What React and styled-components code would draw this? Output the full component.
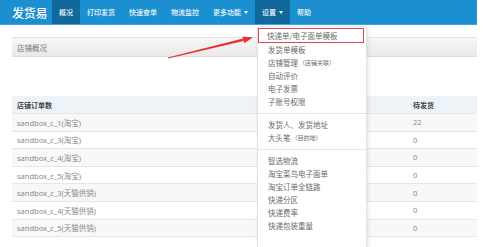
import React from "react";
import styled, { createGlobalStyle } from "styled-components";

const Global = createGlobalStyle`
  html, body { margin: 0; padding: 0; background: #fff; }
  body { font-family: "Noto Sans", "Noto Sans CJK SC", sans-serif; }
`;

const Page = styled.div`
  position: relative;
  width: 500px;
  height: 247px;
  overflow: hidden;
  background: #fff;
`;

const Nav = styled.div`
  width: 477px;
  height: 25px;
  background: #1c8fd0;
  display: flex;
  align-items: stretch;
  padding-left: 12px;
  box-sizing: border-box;
  border-bottom: 1px solid #3aa2dc;
`;

const Logo = styled.div`
  width: 40px;
  display: flex;
  align-items: center;
  color: #fff;
  font-family: "Noto Sans CJK SC", sans-serif;
  font-size: 12px;
  font-weight: 500;
  letter-spacing: -0.2px;
`;

const Tab = styled.div`
  display: flex;
  align-items: center;
  padding: 0 7px;
  color: #f2f8fc;
  font-family: "Noto Sans CJK SC", sans-serif;
  font-size: 7px;
  font-weight: 500;
  background: ${(p) => (p.$active ? "#12679c" : "transparent")};
`;

const Caret = styled.span`
  display: inline-block;
  margin-left: 3px;
  width: 0;
  height: 0;
  border-left: 2.5px solid transparent;
  border-right: 2.5px solid transparent;
  border-top: 3px solid #fff;
`;

const Content = styled.div`
  width: 465px;
  margin-left: 12px;
  padding-top: 12px;
`;

const PanelHeader = styled.div`
  height: 20px;
  display: flex;
  align-items: center;
  padding-left: 5px;
  background: linear-gradient(#f7f7f7, #e9e9e9);
  border-top: 1px solid #e2e2e2;
  border-bottom: 1px solid #dedede;
  box-sizing: border-box;
  color: #777;
  font-family: "Noto Sans CJK SC", sans-serif;
  font-size: 7.5px;
`;

const Blank = styled.div`
  height: 39px;
`;

const Row = styled.div`
  display: grid;
  grid-template-columns: 1fr 69px;
  height: ${(p) => (p.$head ? "18px" : "17.6px")};
  align-items: center;
  border-bottom: 1px solid #e6e6e6;
  box-sizing: border-box;
  background: ${(p) => (p.$head ? "#eef3f8" : p.$stripe ? "#f8f8f8" : "#fff")};
  color: ${(p) => (p.$head ? "#444" : "#8a8a8a")};
  font-family: "Noto Sans", "Noto Sans CJK SC", sans-serif;
  font-size: ${(p) => (p.$head ? "7px" : "7.5px")};
  font-weight: ${(p) => (p.$head ? 700 : 400)};
`;

const Cell = styled.div`
  padding-left: 5px;
  white-space: nowrap;
`;

const Menu = styled.div`
  position: absolute;
  left: 257px;
  top: 26px;
  width: 110px;
  height: 240px;
  background: #fff;
  border: 1px solid #e4e4e4;
  box-shadow: 1px 2px 4px rgba(0, 0, 0, 0.12);
  box-sizing: border-box;
  padding-top: 1px;
  font-family: "Noto Sans CJK SC", sans-serif;
  font-size: 7.5px;
  color: #6a6a6a;
`;

const Item = styled.div`
  height: ${(p) => (p.$boxed ? "15px" : "13px")};
  display: flex;
  align-items: center;
  padding-left: ${(p) => (p.$boxed ? "8px" : "10px")};
  margin: ${(p) => (p.$boxed ? "0 2px 0 0" : "0")};
  border: ${(p) => (p.$boxed ? "1.5px solid #e0464a" : "none")};
  box-sizing: border-box;
  white-space: nowrap;
`;

const Small = styled.span`
  font-size: 6px;
  margin-left: 1px;
`;

const Sep = styled.div`
  height: 10px;
  display: flex;
  align-items: center;
  &::after {
    content: "";
    flex: 1;
    height: 1px;
    background: #e5e5e5;
  }
`;

const Overlay = styled.svg`
  position: absolute;
  left: 0;
  top: 0;
  pointer-events: none;
`;

const rows = [
  ["sandbox_c_1(淘宝)", "22"],
  ["sandbox_c_3(淘宝)", "0"],
  ["sandbox_c_4(淘宝)", "0"],
  ["sandbox_c_5(淘宝)", "0"],
  ["sandbox_c_3(天猫供销)", "0"],
  ["sandbox_c_4(天猫供销)", "0"],
  ["sandbox_c_5(天猫供销)", "0"],
];

const tabs = [
  { t: "概况", active: true },
  { t: "打印发货" },
  { t: "快速查单" },
  { t: "物流监控" },
  { t: "更多功能", caret: true },
  { t: "设置", caret: true, active: true },
  { t: "帮助" },
];

export default function App() {
  return (
    <>
      <Global />
      <Page>
        <Nav>
          <Logo>发货易</Logo>
          {tabs.map((tb) => (
            <Tab key={tb.t} $active={tb.active}>
              {tb.t}
              {tb.caret && <Caret />}
            </Tab>
          ))}
        </Nav>
        <Content>
          <PanelHeader>店铺概况</PanelHeader>
          <Blank />
          <Row $head>
            <Cell>店铺订单数</Cell>
            <Cell>待发货</Cell>
          </Row>
          {rows.map(([name, v], i) => (
            <Row key={name} $stripe={i % 2 === 0}>
              <Cell>{name}</Cell>
              <Cell>{v}</Cell>
            </Row>
          ))}
        </Content>
        <Menu>
          <Item $boxed>快递单/电子面单模板</Item>
          <Item>发货单模板</Item>
          <Item>
            店铺管理<Small>（店铺关联）</Small>
          </Item>
          <Item>自动评价</Item>
          <Item>电子发票</Item>
          <Item>子账号权限</Item>
          <Sep />
          <Item>发货人、发货地址</Item>
          <Item>
            大头笔<Small>（目的地）</Small>
          </Item>
          <Sep />
          <Item>智选物流</Item>
          <Item>淘宝菜鸟电子面单</Item>
          <Item>淘宝订单全链路</Item>
          <Item>快递分区</Item>
          <Item>快递费率</Item>
          <Item>快递包装重量</Item>
        </Menu>
        <Overlay width="500" height="247" viewBox="0 0 500 247">
          <polygon
            points="168.1,58.5 243.6,41.0 243.0,38.6 167.9,57.5"
            fill="#e8322d"
          />
          <polygon points="253,37.5 244.1,43.2 242.5,36.4" fill="#e8322d" />
        </Overlay>
      </Page>
    </>
  );
}
